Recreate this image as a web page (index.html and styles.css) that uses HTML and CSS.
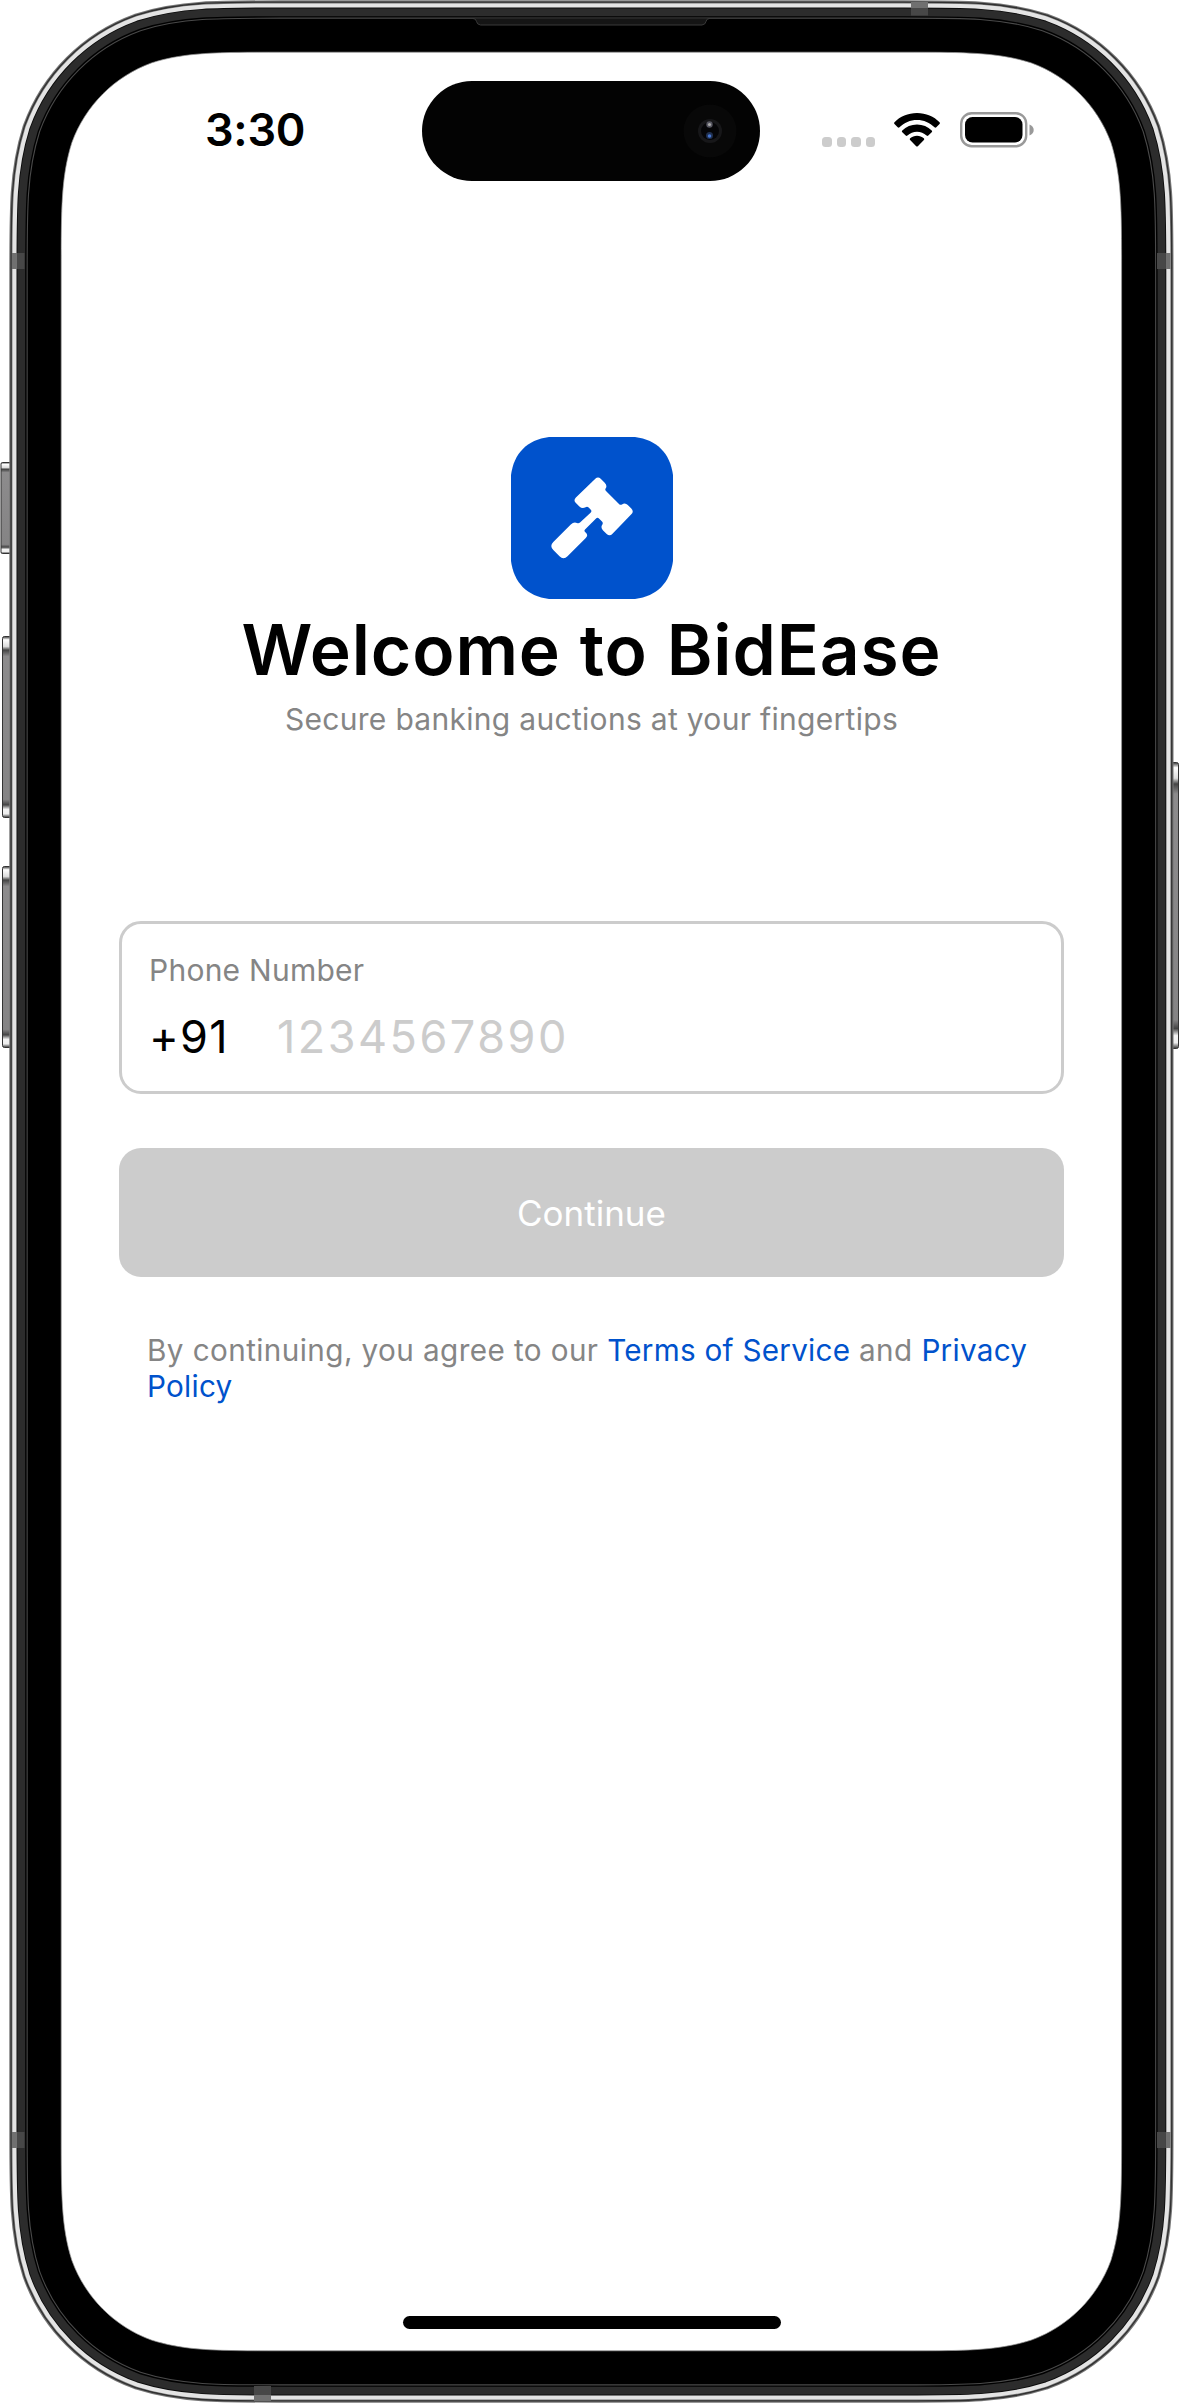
FILE: index.html
```html
<!DOCTYPE html>
<html lang="en">
<head>
<meta charset="utf-8">
<title>BidEase</title>
<link rel="stylesheet" href="styles.css">
</head>
<body>
<div class="phone">
  <svg class="frame" viewBox="0 0 1179 2403" aria-hidden="true">
    <defs>
      <linearGradient id="cap" x1="0" y1="0" x2="0" y2="1">
        <stop offset="0" stop-color="#333"/><stop offset=".018" stop-color="#fff"/><stop offset=".055" stop-color="#ddd"/><stop offset=".075" stop-color="#444"/><stop offset=".11" stop-color="#8c8b8c"/>
        <stop offset=".9" stop-color="#858485"/><stop offset=".93" stop-color="#444"/><stop offset=".955" stop-color="#f4f4f4"/><stop offset=".98" stop-color="#eee"/><stop offset="1" stop-color="#333"/>
      </linearGradient>
      <path id="edge" d="M279.8 52.2H903c62.9 0 94.4 0 128.3 10.7c37 13.5 66.1 42.6 79.6 79.6c10.7 33.9 10.7 65.4 10.7 128.3V2132.2c0 62.9 0 94.4-10.7 128.3c-13.5 37-42.6 66.1-79.6 79.6c-33.9 10.7-65.4 10.7-128.3 10.7H279.8c-62.9 0-94.4 0-128.3-10.7c-37-13.5-66.1-42.6-79.6-79.6c-10.7-33.9-10.7-65.4-10.7-128.3V270.8c0-62.9 0-94.4 10.7-128.3c13.5-37 42.6-66.1 79.6-79.6c33.9-10.7 65.4-10.7 128.3-10.7z"/>
    </defs>
    <g fill="url(#cap)" stroke="#333" stroke-width="1">
      <rect x="1" y="462.500" width="12" height="91" rx="1.500"/>
      <rect x="2.500" y="636.500" width="12" height="181" rx="2"/>
      <rect x="2.500" y="866.500" width="12" height="181" rx="2"/>
      <rect x="1166" y="762.500" width="12.500" height="286" rx="2"/>
    </g>
    <g fill="none">
      <use href="#edge" stroke="#777" stroke-width="103.800"/>
      <use href="#edge" stroke="#303030" stroke-width="101.600"/>
      <use href="#edge" stroke="#777" stroke-width="99"/>
      <use href="#edge" stroke="#e4e4e4" stroke-width="97.600"/>
      <use href="#edge" stroke="#0c0c0c" stroke-width="89.400"/>
      <use href="#edge" stroke="#2c2c2c" stroke-width="87.600"/>
      <use href="#edge" stroke="#000" stroke-width="72"/>
      <use href="#edge" stroke="#4a4a4a" stroke-width="69.200"/>
      <use href="#edge" stroke="#000" stroke-width="67"/>
    </g>
    <path d="M473 18.500q3 0 3.500 3t4 3.500H702q3.500-.5 4-3.500t3.500-3" fill="#151515" stroke="#3a3a3a" stroke-width="1"/>
    <g fill="#707070">
      <path d="M911 2h17v6h-17zM12 253h5v16h-5zM12 2132h5v16h-5zM1165.500 253h5v16h-5zM1165.500 2132h5v16h-5zM254 2395h17v6h-17z"/>
      <path fill="#474747" d="M911 8h17v7.500h-17zM17 253h7.500v16H17zM17 2132h7.500v16H17zM1157 253h8.500v16h-8.500zM1157 2132h8.500v16h-8.500zM254 2386h17v9h-17z"/>
    </g>
    <use href="#edge" fill="#fff" stroke="#999" stroke-width=".7"/>
  </svg>

  <div class="screen">
    <header class="status">
      <span class="time">3:30</span>
      <div class="island">
        <svg viewBox="0 0 54 54" class="camera" aria-hidden="true">
          <circle cx="27" cy="27" r="26.500" fill="#080808"/>
          <circle cx="27" cy="27" r="12" fill="#171719"/>
          <circle cx="27" cy="27" r="9" fill="#050507"/>
          <circle cx="26.500" cy="20.500" r="3.200" fill="#555560"/><circle cx="26.500" cy="20.500" r="1.600" fill="#aaa"/>
          <circle cx="26.500" cy="31.500" r="3.500" fill="#20304f"/><circle cx="26.500" cy="32" r="1.800" fill="#4775d0"/>
        </svg>
      </div>
      <div class="indicators">
        <div class="signal"><i></i><i></i><i></i><i></i></div>
        <svg class="wifi" viewBox="0 0 46 34" aria-hidden="true">
          <path d="M23 0c9 0 17 3.500 22.500 9.200.6.600.6 1.200 0 1.800l-3.200 3.300c-.6.600-1.200.6-1.800 0C35.800 9.700 29.800 7 23 7S10.200 9.700 5.500 14.300c-.6.600-1.200.6-1.800 0L.5 11c-.6-.6-.6-1.200 0-1.800C6 3.500 14 0 23 0z"/>
          <path d="M23 11.500c5.800 0 10.900 2.200 14.700 5.900.6.600.6 1.200 0 1.800l-3.400 3.400c-.6.500-1.100.5-1.700 0-2.700-2.500-6-3.900-9.600-3.900s-6.900 1.400-9.600 3.900c-.6.500-1.100.5-1.700 0l-3.400-3.400c-.6-.6-.6-1.200 0-1.800 3.800-3.700 8.900-5.900 14.700-5.900z"/>
          <path d="M23 22.800c2.600 0 5 .9 6.800 2.500.6.500.6 1.100.1 1.700l-6.100 6.200c-.5.500-1.100.5-1.600 0L16.100 27c-.5-.6-.5-1.200.1-1.700 1.800-1.600 4.200-2.500 6.800-2.500z"/>
        </svg>
        <svg class="battery" viewBox="0 0 74 36" aria-hidden="true">
          <rect x="1.200" y="1.200" width="65" height="33" rx="10.500" fill="none" stroke="#999" stroke-width="2.400"/>
          <rect x="5" y="5" width="57.500" height="25.400" rx="7.500"/>
          <path d="M69.500 12.500c2.700 1 4.200 3 4.200 5.500s-1.500 4.500-4.200 5.500z" fill="#999"/>
        </svg>
      </div>
    </header>

    <main class="content">
      <svg class="logo" viewBox="0 0 162 162" aria-hidden="true">
        <path fill="#0052cc" d="M38 0H124C146 3 159 16 162 38V124C159 146 146 159 124 162H38C16 159 3 146 0 124V38C3 16 16 3 38 0z"/>
        <path fill="#fff" d="M84.300 41.800q2.700-2.600 5.400 0l4 4q2.900 2.800.9 5.800-.8 1.300.4 2.400l13 13q1.400 1.500 3 .4 3.100-2.100 5.800.6l3.500 3.500q2.900 2.900 0 5.800L101.500 96.700q-2.900 3-5.800.2l-3.600-3.500q-2.900-2.900-.7-6 .9-1.500-.4-2.800l-2.800-2.900q-1.700-1.700-3.400 0L74 92.600q-1.300 1.500.4 2.700 3.400 2.700.4 5.700L56.500 119.300q-4 4-8 0l-6.200-6.200q-4-4 0-8L59.800 87.600q3-3 6.200-1.600 1.600.8 3-.5L79.300 76q2-1.700.5-3.300l-1.900-1.900q-1.600-1.600-3.300-.5-3.500 1.900-6.200-.8l-3.500-3.500q-2.800-2.800 0-5.600z"/>
      </svg>
      <h1 class="title">Welcome to BidEase</h1>
      <p class="subtitle">Secure banking auctions at your fingertips</p>
      <form class="form">
        <label class="field">
          <span class="field-label">Phone Number</span>
          <span class="field-row"><span class="prefix">+91</span><span class="placeholder">1234567890</span></span>
        </label>
        <button class="continue" type="button">Continue</button>
      </form>
      <p class="legal">By continuing, you agree to our <a>Terms of Service</a> and <a>Privacy</a><br><a>Policy</a></p>
    </main>
    <div class="home-bar"></div>
  </div>
</div>
</body>
</html>
```
FILE: styles.css
```css
* { box-sizing: border-box; }
body { margin: 0; background: #fff; font-family: Inter, "Liberation Sans", sans-serif; color: #000; }
h1, p { margin: 0; }
.phone { position: relative; width: 1179px; height: 2403px; overflow: hidden; }
.frame { position: absolute; inset: 0; width: 1179px; height: 2403px; }
.screen { position: relative; height: 2403px; padding: 81px 57px 74px 61px; display: flex; flex-direction: column; align-items: stretch; }

.status { display: grid; grid-template-columns: 361px 338px 1fr; height: 100px; }
.time { padding-left: 144px; padding-top: 22px; font-size: 45px; line-height: 54px; font-weight: 600; letter-spacing: -.3px; }
.island { background: #030303; border-radius: 50px; display: flex; align-items: center; justify-content: flex-end; padding-right: 23px; }
.camera { width: 54px; height: 54px; }
.indicators { display: flex; padding: 31px 0 0 62px; align-items: flex-start; }
.signal { display: flex; gap: 5px; padding-top: 25px; margin-right: 19px; }
.signal i { width: 9.500px; height: 9.500px; border-radius: 3.500px; background: #ccc; }
.wifi { width: 46px; height: 34px; margin: 1px 20px 0 0; }
.battery { width: 74px; height: 36px; }

.content { display: flex; flex-direction: column; align-items: center; padding: 256px 58px 0 58px; flex: 1; }
.logo { width: 162px; height: 162px; }
.title { margin-top: 9px; font-size: 69.500px; line-height: 84px; font-weight: 600; letter-spacing: .9px; word-spacing: .5px; white-space: nowrap; }
.subtitle { margin-top: 9px; font-size: 30px; line-height: 36px; letter-spacing: .3px; color: #858585; white-space: nowrap; }
.form { align-self: stretch; margin-top: 184px; display: flex; flex-direction: column; gap: 54px; }
.field { display: flex; flex-direction: column; height: 173px; border: 3px solid #ccc; border-radius: 22px; padding: 28px 27px; }
.field-label { font-size: 30px; line-height: 36px; letter-spacing: .25px; color: #858585; }
.field-row { display: flex; margin-top: 22px; font-size: 45px; line-height: 54px; }
.prefix { width: 128px; letter-spacing: 1.300px; }
.placeholder { color: #ccc; letter-spacing: 2.500px; }
.continue { height: 129px; border: 0; border-radius: 22px; background: #ccc; color: #fff; font: 400 35px/42px Inter, "Liberation Sans", sans-serif; letter-spacing: 0; }
.legal { align-self: stretch; margin: 55px 0 0 28px; font-size: 29.700px; line-height: 36px; letter-spacing: .4px; color: #858585; white-space: nowrap; }
.legal a { color: #0052cc; letter-spacing: .25px; }
.home-bar { align-self: center; width: 378px; height: 13px; border-radius: 7px; background: #000; }
```
